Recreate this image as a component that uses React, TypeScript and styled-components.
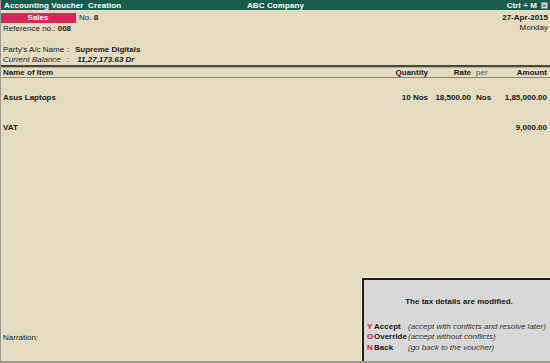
import React from 'react'
import styled, { createGlobalStyle } from 'styled-components'

type Option = {
    key: string
    label: string
    hint: string
}

const options: Option[] = [
    { key: 'Y', label: 'Accept', hint: '(accept with conflicts and resolve later)' },
    { key: 'O', label: 'Override', hint: '(accept without conflicts)' },
    { key: 'N', label: 'Back', hint: '(go back to the voucher)' }
]

export default function App() {
    return (
        <>
            <GlobalStyle />
            <Screen>
                <TitleBar>
                    <TitleLeft>Accounting Voucher&nbsp; Creation</TitleLeft>
                    <TitleCenter>ABC Company</TitleCenter>
                    <TitleRight>
                        Ctrl + M <CloseBox>×</CloseBox>
                    </TitleRight>
                </TitleBar>

                <VoucherHead>
                    <HeadLeft>
                        <TypeRow>
                            <TypeBadge>Sales</TypeBadge>
                            <span>No.</span>&nbsp;<Bold>8</Bold>
                        </TypeRow>
                        <InfoRow>
                            <span>Reference no.:</span>&nbsp;<Bold>008</Bold>
                        </InfoRow>
                    </HeadLeft>
                    <HeadRight>
                        <DateText>27-Apr-2015</DateText>
                        <DayText>Monday</DayText>
                    </HeadRight>
                </VoucherHead>

                <Party>
                    <InfoRow>
                        <Label>Party's A/c Name</Label>
                        <Colon>:</Colon>
                        <Bold>Supreme Digitals</Bold>
                    </InfoRow>
                    <InfoRow>
                        <Label $italic>Current Balance</Label>
                        <Colon>:</Colon>
                        <Bold $italic>&nbsp;11,27,173.63 Dr</Bold>
                    </InfoRow>
                </Party>

                <TableHead>
                    <ItemCol>Name of Item</ItemCol>
                    <QtyCol>Quantity</QtyCol>
                    <RateCol>Rate</RateCol>
                    <PerCol $light>per</PerCol>
                    <AmountCol>Amount</AmountCol>
                </TableHead>

                <Body>
                    <ItemRow $top={14}>
                        <ItemCol>Asus Laptops</ItemCol>
                        <QtyCol>10 Nos</QtyCol>
                        <RateCol>18,500.00</RateCol>
                        <PerCol>Nos</PerCol>
                        <AmountCol>1,85,000.00</AmountCol>
                    </ItemRow>
                    <ItemRow $top={20}>
                        <ItemCol>VAT</ItemCol>
                        <QtyCol />
                        <RateCol />
                        <PerCol />
                        <AmountCol>9,000.00</AmountCol>
                    </ItemRow>
                </Body>

                <Narration>Narration:</Narration>

                <Dialog>
                    <DialogTitle>The tax details are modified.</DialogTitle>
                    <OptionList>
                        {options.map((o) => (
                            <OptionRow key={o.key}>
                                <OptionKey>{o.key}</OptionKey>
                                <OptionLabel>{o.label}</OptionLabel>
                                <OptionHint>{o.hint}</OptionHint>
                            </OptionRow>
                        ))}
                    </OptionList>
                </Dialog>
            </Screen>
        </>
    )
}

const GlobalStyle = createGlobalStyle`
    html, body {
        margin: 0;
        padding: 0;
        background: #e3dcc1;
    }
    body {
        font-family: 'Liberation Sans', Arial, sans-serif;
        font-size: 8px;
        color: #1a1a1a;
    }
`

const Screen = styled.div`
    position: relative;
    width: 550px;
    height: 363px;
    box-sizing: border-box;
    background: #e3dcc1;
    display: flex;
    flex-direction: column;
    overflow: hidden;
    border-left: 1px solid #9a9a90;
    border-bottom: 2px solid #9a9a90;
    white-space: nowrap;
`

const TitleBar = styled.div`
    height: 10px;
    background: #195c4b;
    color: #ffffff;
    font-weight: bold;
    font-size: 8px;
    display: flex;
    align-items: center;
    padding: 0 2px 0 3px;
    position: relative;
    letter-spacing: 0.1px;
`

const TitleLeft = styled.div`
    flex: 1;
`

const TitleCenter = styled.div`
    position: absolute;
    left: 0;
    right: 0;
    text-align: center;
    pointer-events: none;
`

const TitleRight = styled.div`
    display: flex;
    align-items: center;
    gap: 4px;
`

const CloseBox = styled.span`
    width: 7px;
    height: 7px;
    background: #e0e0e0;
    color: #333;
    border: 1px solid #888;
    font-size: 8px;
    line-height: 6px;
    text-align: center;
    box-sizing: border-box;
    font-weight: normal;
`

const VoucherHead = styled.div`
    display: flex;
    justify-content: space-between;
    padding: 2px 2px 0 0;
`

const HeadLeft = styled.div`
    display: flex;
    flex-direction: column;
`

const TypeRow = styled.div`
    display: flex;
    align-items: center;
    height: 11px;
`

const TypeBadge = styled.div`
    width: 76px;
    height: 10px;
    background: #d7265a;
    color: #ffffff;
    font-weight: bold;
    text-align: center;
    line-height: 10px;
    margin-right: 3px;
    margin-left: -1px;
`

const InfoRow = styled.div`
    display: flex;
    align-items: center;
    height: 10px;
    padding-left: 2px;
`

const Bold = styled.span<{ $italic?: boolean }>`
    font-weight: bold;
    font-style: ${(p) => (p.$italic ? 'italic' : 'normal')};
`

const HeadRight = styled.div`
    display: flex;
    flex-direction: column;
    align-items: flex-end;
    padding-top: 1px;
`

const DateText = styled.div`
    font-weight: bold;
    height: 10px;
    line-height: 10px;
`

const DayText = styled.div`
    height: 10px;
    line-height: 10px;
`

const Party = styled.div`
    padding-top: 11px;
    padding-bottom: 1px;
`

const Label = styled.span<{ $italic?: boolean }>`
    width: 64px;
    font-style: ${(p) => (p.$italic ? 'italic' : 'normal')};
`

const Colon = styled.span`
    width: 8px;
`

const TableHead = styled.div`
    display: flex;
    align-items: center;
    height: 10px;
    font-weight: bold;
    border-top: 2px solid #4a4a40;
    border-bottom: 1px solid #8c8878;
    box-shadow: inset 0 1px 0 #b4ae98;
    padding: 0 2px;
`

const Body = styled.div`
    flex: 1;
    display: flex;
    flex-direction: column;
`

const ItemRow = styled.div<{ $top: number }>`
    display: flex;
    align-items: center;
    height: 10px;
    margin-top: ${(p) => p.$top}px;
    font-weight: bold;
    padding: 0 2px;
`

const ItemCol = styled.div`
    flex: 1;
    font-weight: bold;
`

const QtyCol = styled.div`
    width: 60px;
    box-sizing: border-box;
    padding-right: 3px;
    text-align: right;
`

const RateCol = styled.div`
    width: 42px;
    box-sizing: border-box;
    padding-right: 2px;
    text-align: right;
`

const PerCol = styled.div<{ $light?: boolean }>`
    width: 17px;
    box-sizing: border-box;
    padding-left: 3px;
    font-weight: ${(p) => (p.$light ? 'normal' : 'bold')};
    color: ${(p) => (p.$light ? '#555' : 'inherit')};
`

const AmountCol = styled.div`
    width: 58px;
    box-sizing: border-box;
    padding-right: 1px;
    text-align: right;
`

const Narration = styled.div`
    height: 10px;
    padding: 0 0 18px 2px;
`

const Dialog = styled.div`
    position: absolute;
    left: 361px;
    top: 278px;
    right: -4px;
    bottom: -4px;
    background: #d8d8d8;
    border-top: 2px solid #1e1e1e;
    border-left: 2px solid #1e1e1e;
    box-shadow: -1px -1px 0 #f4f0e0;
    display: flex;
    flex-direction: column;
    padding: 17px 0 0 3px;
`

const DialogTitle = styled.div`
    font-weight: bold;
    text-align: center;
    padding-right: 3px;
    height: 10px;
`

const OptionList = styled.div`
    margin-top: 14px;
    display: flex;
    flex-direction: column;
`

const OptionRow = styled.div`
    display: flex;
    align-items: center;
    height: 10.5px;
`

const OptionKey = styled.span`
    color: #e01010;
    font-weight: bold;
    width: 7px;
`

const OptionLabel = styled.span`
    font-weight: bold;
    width: 34px;
`

const OptionHint = styled.span`
    font-style: italic;
    color: #333;
`
